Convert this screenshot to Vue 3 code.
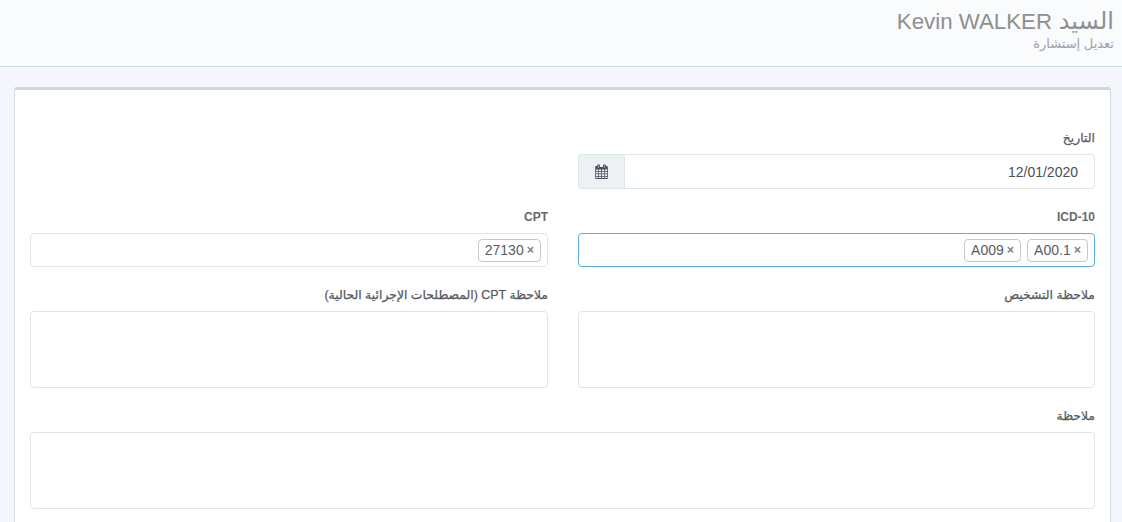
<template>
  <div class="page" dir="rtl">
    <header class="page-head">
      <h1>السيد <span class="name">Kevin WALKER</span></h1>
      <p>تعديل إستشارة</p>
    </header>

    <main class="card">
      <form class="form-grid">
        <div class="group">
          <label>التاريخ</label>
          <div class="date-input">
            <input type="text" dir="ltr" value="12/01/2020" />
            <span class="addon">
              <svg width="13" height="15" viewBox="0 0 13 15">
                <path fill="#4a4f5e" d="M3 0.5h1.2q.8 0 .8.8V3h3V1.3q0-.8.8-.8H10q.8 0 .8.8V2h1q1 0 1 1v11q0 1-1 1H1.2q-1 0-1-1V3q0-1 1-1h1V1.3q0-.8.8-.8zM3.4 1.4v2.4h.7V1.4zM8.9 1.4v2.4h.7V1.4zM1 5.5V7h2V5.5zM3.7 5.5V7h2.3V5.5zM6.8 5.5V7h2.3V5.5zM9.8 5.5V7H12V5.5zM1 7.7v1.8h2V7.7zM3.7 7.7v1.8h2.3V7.7zM6.8 7.7v1.8h2.3V7.7zM9.8 7.7v1.8H12V7.7zM1 10.2V12h2v-1.8zM3.7 10.2V12h2.3v-1.8zM6.8 10.2V12h2.3v-1.8zM9.8 10.2V12H12v-1.8zM1 12.7V14h2v-1.3zM3.7 12.7V14h2.3v-1.3zM6.8 12.7V14h2.3v-1.3zM9.8 12.7V14H12v-1.3z" fill-rule="evenodd" />
              </svg>
            </span>
          </div>
        </div>
        <div class="group"></div>

        <div class="group">
          <label class="latin">ICD-10</label>
          <div class="tags focused">
            <span v-for="t in icdTags" :key="t" class="tag">{{ t }}<i>×</i></span>
          </div>
        </div>
        <div class="group">
          <label class="latin">CPT</label>
          <div class="tags">
            <span v-for="t in cptTags" :key="t" class="tag">{{ t }}<i>×</i></span>
          </div>
        </div>

        <div class="group">
          <label>ملاحظة التشخيص</label>
          <textarea></textarea>
        </div>
        <div class="group">
          <label>ملاحظة CPT (المصطلحات الإجرائية الحالية)</label>
          <textarea></textarea>
        </div>

        <div class="group wide">
          <label>ملاحظة</label>
          <textarea></textarea>
        </div>
      </form>
    </main>
  </div>
</template>

<script setup>
const icdTags = ['A00.1', 'A009']
const cptTags = ['27130']
</script>

<style>
html, body {
  margin: 0;
  background: #f4f6fb;
}
</style>

<style scoped>
.page {
  height: 522px;
  overflow: hidden;
  background: #f4f6fb;
  font-family: "Liberation Sans", "DejaVu Sans", sans-serif;
  color: #495057;
}

.page-head {
  box-sizing: border-box;
  height: 67px;
  padding: 7px 8px 0;
  background: #fafbfd;
  border-bottom: 1px solid #c9dde2;
}
.page-head h1 {
  margin: 0;
  font-size: 24px;
  line-height: 28px;
  font-weight: 400;
  color: #8e8f90;
}
.page-head .name {
  font-size: 22.3px;
}
.page-head p {
  margin: 1px 0 0;
  font-size: 13px;
  line-height: 14px;
  color: #97a3ac;
}

.card {
  box-sizing: border-box;
  height: 460px;
  margin: 20px 11px 0 14px;
  padding: 40px 15px 0;
  background: #fff;
  border: 1px solid #d0dbe4;
  border-top: 3px solid #cdd6df;
  border-radius: 3px;
}

.form-grid {
  display: grid;
  grid-template-columns: 517px 518px;
  column-gap: 30px;
  row-gap: 20px;
}
.wide {
  grid-column: 1 / -1;
}

label {
  display: block;
  height: 16px;
  margin-bottom: 8px;
  font-size: 12.4px;
  line-height: 16px;
  font-weight: 400;
  color: #55595d;
  -webkit-text-stroke: 0.25px #55595d;
}
label.latin {
  font-size: 12px;
  font-weight: 700;
  color: #666a6e;
  -webkit-text-stroke: 0;
}

input,
textarea,
.tags {
  display: block;
  box-sizing: border-box;
  width: 100%;
  border: 1px solid #dbe6e9;
  border-radius: 4px;
  background: #fff;
  outline: none;
  font-family: inherit;
  color: #495057;
}

.date-input {
  display: flex;
  height: 35px;
}
.date-input input {
  flex: 1;
  min-width: 0;
  height: 35px;
  padding: 0 16px;
  font-size: 14px;
  text-align: right;
  border-radius: 0 4px 4px 0;
}
.addon {
  display: flex;
  align-items: center;
  justify-content: center;
  flex: none;
  box-sizing: border-box;
  width: 46px;
  padding-right: 1px;
  background: #edf1f3;
  border: 1px solid #dbe6e9;
  border-right: 0;
  border-radius: 4px 0 0 4px;
}

.tags {
  display: flex;
  align-items: center;
  gap: 6px;
  height: 34px;
  padding: 0 6px;
}
.tags.focused {
  border-color: #5aaee6;
}
.tag {
  display: flex;
  align-items: center;
  direction: ltr;
  flex-direction: row;
  box-sizing: border-box;
  height: 23px;
  padding: 0 6px;
  border: 1px solid #c4c9cc;
  border-radius: 4px;
  font-size: 14px;
  color: #555c61;
}
.tag i {
  margin-left: 3px;
  font-style: normal;
  font-weight: 700;
  font-size: 12.5px;
  color: #7d8387;
}

textarea {
  height: 77px;
  resize: none;
}
</style>
